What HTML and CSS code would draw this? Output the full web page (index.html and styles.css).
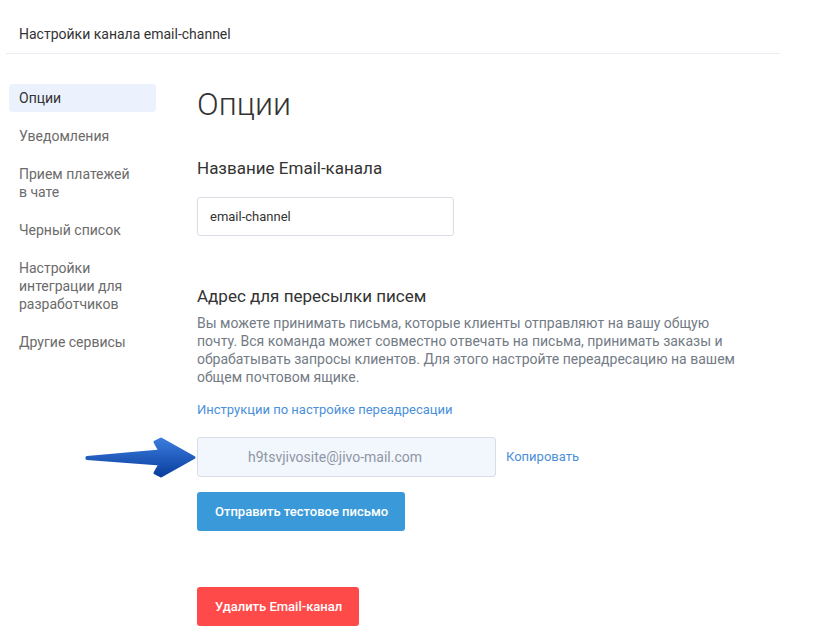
FILE: index.html
```html
<!DOCTYPE html>
<html lang="ru">
<head>
    <meta charset="UTF-8">
    <meta name="viewport" content="width=device-width, initial-scale=1.0">
    <title>Настройки канала email-channel</title>
    <link rel="stylesheet" href="styles.css">
</head>
<body>

    <!-- Header -->
    <div class="header">
        <span class="header-title">Настройки канала email-channel</span>
    </div>

    <div class="layout">
        <!-- Sidebar Menu -->
        <div class="sidebar">
            <ul>
                <li class="active">Опции</li>
                <li>Уведомления</li>
                <li>Прием платежей<br>в чате</li>
                <li>Черный список</li>
                <li>Настройки<br>интеграции для<br>разработчиков</li>
                <li>Другие сервисы</li>
            </ul>
        </div>

        <!-- Main Area -->
        <div class="main">
            <h1>Опции</h1>

            <h3 class="section-title">Название Email-канала</h3>
            <input type="text" class="text-input" value="email-channel">

            <h3 class="section-title forward-title">Адрес для пересылки писем</h3>
            <p class="description">Вы можете принимать письма, которые клиенты отправляют на вашу общую почту. Вся команда может совместно отвечать на письма, принимать заказы и обрабатывать запросы клиентов. Для этого настройте переадресацию на вашем общем почтовом ящике.</p>
            <a class="link instructions">Инструкции по настройке переадресации</a>

            <div class="email-row">
                <svg class="pointer-arrow" width="118" height="46" viewBox="0 0 118 46">
                    <defs>
                        <linearGradient id="arrowFill" x1="0" y1="0" x2="0" y2="1">
                            <stop offset="0" stop-color="#3a7bdc"/>
                            <stop offset="1" stop-color="#0a3f9e"/>
                        </linearGradient>
                    </defs>
                    <polygon points="4,21.5 77,15 72,6 78,3 111,21.5 78,40 72,37 77,28 4,22.5"
                             fill="url(#arrowFill)" stroke="url(#arrowFill)" stroke-width="3" stroke-linejoin="round"/>
                </svg>
                <div class="email-field">h9tsvjivosite@jivo-mail.com</div>
                <a class="link copy">Копировать</a>
            </div>

            <button class="btn btn-blue">Отправить тестовое письмо</button>

            <button class="btn btn-red">Удалить Email-канал</button>
        </div>
    </div>

</body>
</html>
```

FILE: styles.css
```css
body {
    font-family: Roboto, "Noto Sans", Arial, sans-serif;
    background-color: #fff;
    color: #333;
    margin: 0;
}
/* Header */
.header {
    margin: 0 44px 0 6px;
    height: 54px;
    border-bottom: 1px solid #e8edf3;
    display: flex;
    align-items: center;
    padding-left: 13px;
    padding-top: 14px;
    box-sizing: border-box;
}
.header-title {
    font-size: 14px;
    color: #333;
}
.layout {
    display: flex;
    padding-top: 30px;
}
/* Sidebar Menu */
.sidebar {
    width: 147px;
    margin-left: 9px;
    flex-shrink: 0;
}
.sidebar ul {
    list-style: none;
    padding: 0;
    margin: 0;
}
.sidebar ul li {
    font-size: 14px;
    line-height: 18px;
    padding: 5px 10px;
    margin-bottom: 10px;
    color: #6b6b6b;
    border-radius: 4px;
    cursor: pointer;
}
.sidebar ul li.active {
    background-color: #ecf2fd;
    color: #333;
}
/* Main */
.main {
    margin-left: 41px;
    display: flex;
    flex-direction: column;
    align-items: flex-start;
}
.main h1 {
    font-size: 32px;
    font-weight: 300;
    line-height: 40px;
    margin: 0;
    color: #333;
}
.section-title {
    font-size: 17px;
    font-weight: 400;
    line-height: 24px;
    margin: 32px 0 17px;
    color: #333;
}
.forward-title {
    margin: 48px 0 6px;
}
.text-input {
    width: 257px;
    height: 39px;
    box-sizing: border-box;
    border: 1px solid #d9dee6;
    border-radius: 3px;
    padding: 0 12px;
    font-family: inherit;
    font-size: 13px;
    color: #333;
    margin: 0;
}
.description {
    width: 545px;
    font-size: 14px;
    line-height: 18px;
    color: #737b85;
    margin: 0;
}
.link {
    color: #4a90d9;
    font-size: 13px;
    line-height: 18px;
    cursor: pointer;
}
.instructions {
    margin-top: 15px;
}
.email-row {
    position: relative;
    display: flex;
    align-items: center;
    margin-top: 18px;
}
.pointer-arrow {
    position: absolute;
    left: -114px;
    top: -1px;
}
.email-field {
    width: 299px;
    height: 40px;
    box-sizing: border-box;
    background-color: #f2f6fd;
    border: 1px solid #d9dee6;
    border-radius: 3px;
    padding-left: 50px;
    display: flex;
    align-items: center;
    font-size: 14px;
    color: #8e96a3;
}
.copy {
    margin-left: 10px;
}
.btn {
    height: 39px;
    border: none;
    border-radius: 3px;
    padding: 0 18px;
    font-family: inherit;
    font-size: 13px;
    font-weight: 500;
    color: #fff;
    white-space: nowrap;
    cursor: pointer;
}
.btn-blue {
    margin-top: 15px;
    width: 208px;
    background-color: #3a9ad9;
}
.btn-red {
    margin-top: 56px;
    width: 162px;
    background-color: #ff4a4a;
}
```
